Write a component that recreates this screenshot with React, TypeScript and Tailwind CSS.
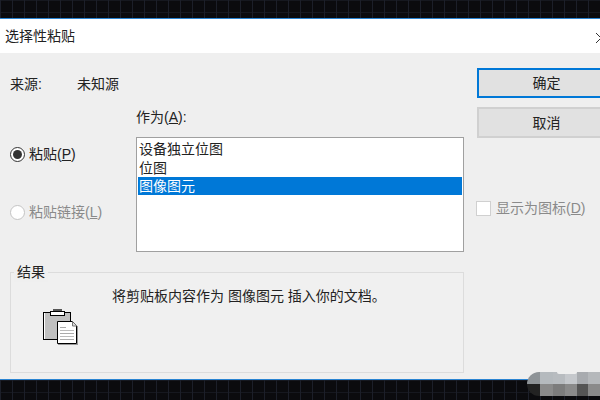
import React from 'react';

// Dark blueprint strip behind the dialog
function GridStrip({ height }: { height: string }) {
  return (
    <div
      className={`${height} w-full bg-[#0b0b0e] bg-[linear-gradient(to_right,#1c1f29_1px,transparent_1px),linear-gradient(to_bottom,#16181f_1px,transparent_1px)] bg-[size:12px_12px]`}
    />
  );
}

function ClipboardIcon() {
  return (
    <svg width="36" height="36" viewBox="0 0 36 36" shapeRendering="crispEdges" className="block">
      <rect x="0.5" y="3.5" width="27" height="27" fill="#c0c0c0" stroke="#000" />
      <rect x="1" y="4" width="1" height="26" fill="#fff" />
      <rect x="7.5" y="2.5" width="14" height="4" fill="#fff" stroke="#000" />
      <rect x="10" y="0" width="9" height="2" fill="#555" />
      <path d="M14.5 12.5H29.5L33.5 17V34.5H14.5Z" fill="#fff" stroke="#000" shapeRendering="auto" />
      <path d="M29.5 12.5V17H33.5" fill="#ddd" stroke="#777" shapeRendering="auto" />
      <rect x="34" y="17" width="1" height="18" fill="#999" />
      <rect x="15" y="35" width="20" height="1" fill="#999" />
      <rect x="17" y="18" width="6" height="1" fill="#aaa" />
      <rect x="17" y="21" width="14" height="1" fill="#bbb" />
      <rect x="17" y="24" width="14" height="1" fill="#aaa" />
      <rect x="17" y="27" width="14" height="1" fill="#bbb" />
      <rect x="17" y="30" width="14" height="1" fill="#aaa" />
    </svg>
  );
}

export default function App() {
  return (
    <div
      className="relative w-[600px] h-[400px] overflow-hidden text-[14px] leading-[20px] text-[#222] bg-[#0b0b0e]"
      style={{ fontFamily: '"Liberation Sans", "Noto Sans CJK SC", sans-serif' }}
    >
      <GridStrip height="h-[18px]" />

      <div className="border-y border-[#2a84d2]">
        {/* Title bar */}
        <div className="h-[34px] bg-white flex items-center justify-between pl-[5px]">
          <span>选择性粘贴</span>
          <svg width="4" height="12" viewBox="0 0 4 12" className="mt-[3px]">
            <path d="M0 1L10 11M10 1L0 11" stroke="#333" strokeWidth="1" />
          </svg>
        </div>

        {/* Body */}
        <div className="h-[326px] bg-[#efefef] flex">
          <div className="w-[464px] pl-[10px] pt-[21px] shrink-0">
            <div className="flex h-[20px]">
              <span className="w-[67px]">来源:</span>
              <span>未知源</span>
            </div>

            <div className="flex">
              <div className="w-[126px] pt-[50px]">
                <label className="flex items-center h-[20px]">
                  <span className="w-[15px] h-[15px] rounded-full border border-[#333] bg-white flex items-center justify-center">
                    <span className="w-[9px] h-[9px] rounded-full bg-[#333]" />
                  </span>
                  <span className="ml-[4px]">
                    粘贴(<span className="underline">P</span>)
                  </span>
                </label>
                <label className="flex items-center h-[20px] mt-[38px] text-[#8a8a8a]">
                  <span className="w-[15px] h-[15px] rounded-full border border-[#c4c4c4] bg-white" />
                  <span className="ml-[4px]">
                    粘贴链接(<span className="underline">L</span>)
                  </span>
                </label>
              </div>

              <div className="flex-1 pt-[13px]">
                <div>
                  作为(<span className="underline">A</span>):
                </div>
                <div className="mt-[10px] h-[115px] border border-[#a0a0a0] bg-white p-px">
                  <div className="h-[19px] pl-px">设备独立位图</div>
                  <div className="h-[19px] pl-px">位图</div>
                  <div className="h-[18px] leading-[18px] pl-px bg-[#0078d7] text-white">图像图元</div>
                </div>
              </div>
            </div>

            {/* Result group */}
            <div className="relative mt-[20px] h-[101px] border border-[#dcdcdc] bg-[#f0f0f0] pl-[101px] pt-[13px]">
              <span className="absolute left-[3px] top-[-11px] px-[3px] bg-[#efefef]">结果</span>
              <div>将剪贴板内容作为 图像图元 插入你的文档。</div>
              <div className="-ml-[69px] mt-[3px]">
                <ClipboardIcon />
              </div>
            </div>
          </div>

          <div className="flex-1 pl-[13px] pt-[15px]">
            <button className="block w-[140px] h-[30px] border-2 border-[#0078d7] bg-[#e1e1e1] pr-px">
              确定
            </button>
            <button className="block mt-[9px] w-[140px] h-[31px] border-2 border-[#d0d0d0] bg-[#e1e1e1] pr-px">
              取消
            </button>
            <label className="flex items-center mt-[60px] -ml-px text-[#8a8a8a]">
              <span className="w-[15px] h-[15px] border border-[#d0d0d0] bg-white" />
              <span className="ml-[5px]">
                显示为图标(<span className="underline">D</span>)
              </span>
            </label>
          </div>
        </div>
      </div>

      <GridStrip height="h-[20px]" />

      {/* Pixelated watermark in the corner */}
      <div className="absolute left-[527px] top-[372px] w-[73px] h-[24px] rounded-l-[12px] overflow-hidden flex flex-col">
        <div className="h-[12px] flex">
          <span className="w-[13px] bg-[#8e9397]" />
          <span className="w-[13px] bg-[#b5babe]" />
          <span className="w-[12px] bg-[#b8bcc0]" />
          <span className="w-[12px] bg-[#c5c8cc]" />
          <span className="w-[11px] bg-[#a8abaf]" />
          <span className="w-[12px] bg-[#b5b8bb]" />
        </div>
        <div className="h-[12px] flex">
          <span className="w-[13px] bg-[#222222]" />
          <span className="w-[13px] bg-[#8a8a8a]" />
          <span className="w-[12px] bg-[#7c7c7c]" />
          <span className="w-[12px] bg-[#8a8a8a]" />
          <span className="w-[11px] bg-[#555555]" />
          <span className="w-[12px] bg-[#8a8a8a]" />
        </div>
        <span className="absolute left-[30px] top-0 w-[20px] h-[2px] rounded-b-[2px] bg-[#efefef]" />
      </div>
    </div>
  );
}
